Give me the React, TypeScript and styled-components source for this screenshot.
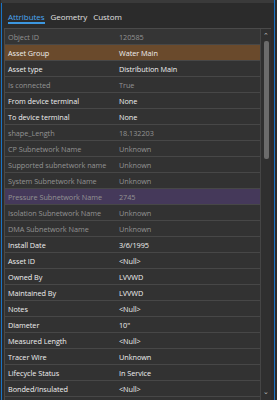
import React from "react";
import styled, { createGlobalStyle } from "styled-components";

const GlobalStyle = createGlobalStyle`
  html, body {
    margin: 0;
    padding: 0;
    background: #2b2b2b;
  }
  * {
    box-sizing: border-box;
  }
`;

const Frame = styled.div`
  background: #2b2b2b;
  border-left: 1px solid #2b2b2b;
  display: flex;
  height: 400px;
  overflow: hidden;
  width: 277px;
`;

const Edge = styled.div`
  background: #1a73c4;
  flex: 0 0 1px;
`;

const Gutter = styled.div`
  flex: 0 0 2px;
`;

const Panel = styled.div`
  display: flex;
  flex: 1;
  flex-direction: column;
  font-family: "Open Sans", "Noto Sans", sans-serif;
  padding-left: 2px;
`;

const TopStrip = styled.div`
  background: #3a3a3a;
  height: 3px;
  margin-left: -3px;
`;

const Tabs = styled.div`
  display: flex;
  gap: 6px;
  height: 25px;
  padding: 9px 0 0 4px;
`;

const Tab = styled.div<{ $active?: boolean }>`
  border-bottom: 2px solid ${(p) => (p.$active ? "#3c97e0" : "transparent")};
  color: ${(p) => (p.$active ? "#4aa6f0" : "#e0e0e0")};
  font-size: 8px;
  height: 12px;
  letter-spacing: -0.05px;
  line-height: 10px;
`;

const TableWrap = styled.div`
  border-left: 1px solid #4a4a4a;
  border-top: 1px solid #4a4a4a;
  display: flex;
  flex: 1;
  margin-right: 3px;
  min-height: 0;
`;

const Rows = styled.div`
  flex: 1;
`;

const Row = styled.div<{ $tint?: string }>`
  align-items: center;
  background: ${(p) => p.$tint || "#323232"};
  border-bottom: 1px solid #474747;
  display: grid;
  font-size: 7.3px;
  grid-template-columns: 111px 1fr;
  height: 16px;
  letter-spacing: -0.05px;
  white-space: nowrap;
`;

const Cell = styled.div<{ $dim?: boolean }>`
  color: ${(p) => (p.$dim ? "#939393" : "#f0f0f0")};
  overflow: hidden;
  padding-left: 3px;
`;

const Scroll = styled.div`
  align-items: center;
  background: #2f2f2f;
  border-left: 1px solid #454545;
  display: flex;
  flex: 0 0 11px;
  flex-direction: column;
  padding: 3px 0;
`;

const Arrow = styled.div`
  color: #bcbcbc;
  font-family: "DejaVu Sans", sans-serif;
  font-size: 7px;
  height: 9px;
  line-height: 9px;
`;

const Thumb = styled.div`
  background: #6b6b6b;
  border-radius: 2px;
  height: 118px;
  width: 5px;
`;

const Spacer = styled.div`
  flex: 1;
`;

type Item = { label: string; value: string; dim?: boolean; tint?: string };

const items: Item[] = [
  { label: "Object ID", value: "120585", dim: true, tint: "#353535" },
  { label: "Asset Group", value: "Water Main", tint: "#6a4a2c" },
  { label: "Asset type", value: "Distribution Main" },
  { label: "Is connected", value: "True", dim: true },
  { label: "From device terminal", value: "None" },
  { label: "To device terminal", value: "None" },
  { label: "shape_Length", value: "18.132203", dim: true },
  { label: "CP Subnetwork Name", value: "Unknown", dim: true },
  { label: "Supported subnetwork name", value: "Unknown", dim: true },
  { label: "System Subnetwork Name", value: "Unknown", dim: true },
  { label: "Pressure Subnetwork Name", value: "2745", dim: true, tint: "#45395a" },
  { label: "Isolation Subnetwork Name", value: "Unknown", dim: true },
  { label: "DMA Subnetwork Name", value: "Unknown", dim: true },
  { label: "Install Date", value: "3/6/1995" },
  { label: "Asset ID", value: "<Null>" },
  { label: "Owned By", value: "LVVWD" },
  { label: "Maintained By", value: "LVVWD" },
  { label: "Notes", value: "<Null>" },
  { label: "Diameter", value: "10\"" },
  { label: "Measured Length", value: "<Null>" },
  { label: "Tracer Wire", value: "Unknown" },
  { label: "Lifecycle Status", value: "In Service" },
  { label: "Bonded/Insulated", value: "<Null>" },
  { label: "Comments", value: "" },
];

const App: React.FunctionComponent = (): JSX.Element => {
  return (
    <>
      <GlobalStyle />
      <Frame>
        <Edge />
        <Panel>
          <TopStrip />
          <Tabs>
            <Tab $active>Attributes</Tab>
            <Tab>Geometry</Tab>
            <Tab>Custom</Tab>
          </Tabs>
          <TableWrap>
            <Rows>
              {items.map((it) => (
                <Row key={it.label} $tint={it.tint}>
                  <Cell $dim={it.dim}>{it.value ? it.label : ""}</Cell>
                  <Cell $dim={it.dim}>{it.value}</Cell>
                </Row>
              ))}
            </Rows>
            <Scroll>
              <Arrow>⌃</Arrow>
              <Thumb />
              <Spacer />
              <Arrow>⌄</Arrow>
            </Scroll>
          </TableWrap>
        </Panel>
        <Edge />
        <Gutter />
      </Frame>
    </>
  );
};

export default App;
